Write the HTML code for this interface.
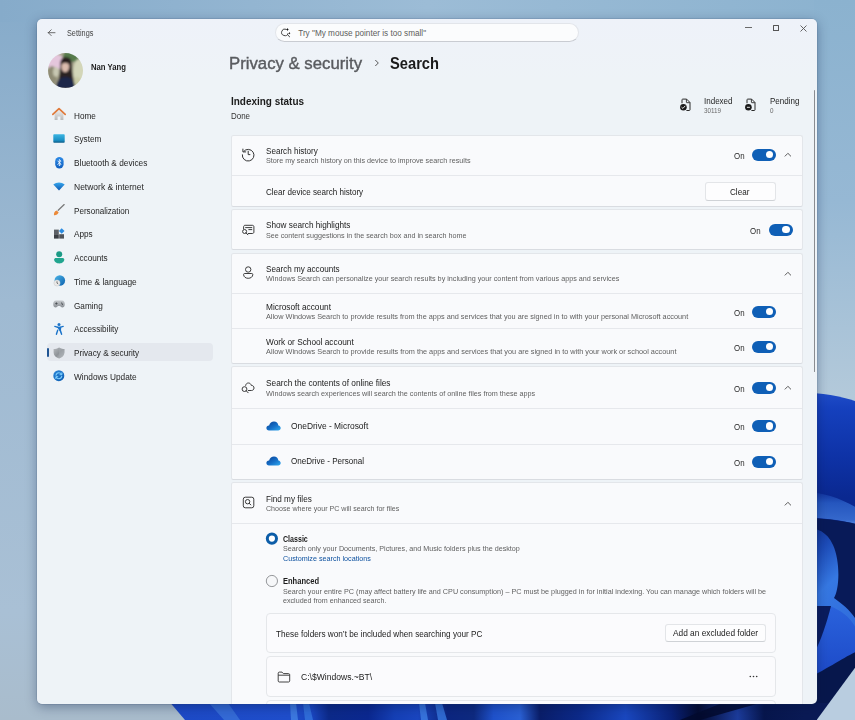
<!DOCTYPE html>
<html><head><meta charset="utf-8">
<style>
*{margin:0;padding:0;box-sizing:border-box}
html,body{width:855px;height:720px;overflow:hidden}
body{position:relative;font-family:"Liberation Sans",sans-serif;background:#8fb0cc}
#wp{position:absolute;left:0;top:0}
.win{position:absolute;left:37px;top:19px;width:780px;height:685px;border-radius:5px;overflow:hidden;background:linear-gradient(#eef2f9,#eef3f7 60px);box-shadow:0 3px 12px rgba(0,20,60,.35),0 0 0 0.5px rgba(60,80,110,.25)}
.pg{position:absolute;left:-37px;top:-19px;width:855px;height:720px}
.t{position:absolute;white-space:nowrap;line-height:1;color:#1b1b1b;transform-origin:0 0}
.s{color:#5f5f5f}
.card{position:absolute;left:231.3px;width:571.5px;background:#f9fafc;border:1px solid #e3e6ea;border-bottom-color:#d9dce1;border-radius:2.5px}
.sep{position:absolute;left:232px;width:570px;height:1px;background:#e6e8ec}
.tg{position:absolute;width:24px;height:12px;border-radius:6px;background:#0f5fb6}
.tg::after{content:"";position:absolute;left:13.6px;top:2.2px;width:7.6px;height:7.6px;border-radius:50%;background:#fff}
.pg svg{position:absolute;overflow:visible}
</style></head><body>
<svg id="wp" width="855" height="720" viewBox="0 0 855 720">
<defs>
<linearGradient id="sky" x1="0" y1="0" x2="0" y2="1"><stop offset="0" stop-color="#86abca"/><stop offset=".42" stop-color="#9fbad2"/><stop offset=".85" stop-color="#a9c0d5"/><stop offset="1" stop-color="#a9bccc"/></linearGradient>
<linearGradient id="skyt" x1="0" y1="0" x2="1" y2="0"><stop offset="0" stop-color="#86abca"/><stop offset=".5" stop-color="#9cbcd6"/><stop offset="1" stop-color="#8bb2cf"/></linearGradient>
<linearGradient id="skyr" x1="0" y1="0" x2="0" y2="1"><stop offset="0" stop-color="#8bb2cf"/><stop offset=".28" stop-color="#96b8d4"/><stop offset=".55" stop-color="#b3c9da"/><stop offset="1" stop-color="#b3c9da"/></linearGradient>
<linearGradient id="pa" x1="0" y1="0" x2="0" y2="1"><stop offset="0" stop-color="#1f4cc8"/><stop offset=".05" stop-color="#1540bd"/><stop offset=".2" stop-color="#0e32a6"/><stop offset=".32" stop-color="#0a2890"/><stop offset="1" stop-color="#0a2585"/></linearGradient>
<linearGradient id="pb" x1="0" y1="0" x2="0" y2="1"><stop offset="0" stop-color="#0e2f9a"/><stop offset=".35" stop-color="#2556be"/><stop offset=".85" stop-color="#3568cc"/><stop offset="1" stop-color="#5a90e6"/></linearGradient>
<linearGradient id="pd" x1="0" y1="0" x2="0.3" y2="1"><stop offset="0" stop-color="#0c2a84"/><stop offset=".2" stop-color="#1d4cb8"/><stop offset=".4" stop-color="#3678e2"/><stop offset="1" stop-color="#2a62d6"/></linearGradient>
<linearGradient id="pe" x1="0" y1="0" x2="0" y2="1"><stop offset="0" stop-color="#2a62dc"/><stop offset="1" stop-color="#1c48c6"/></linearGradient>
<linearGradient id="bs" x1="0" y1="0" x2="1" y2="0">
<stop offset="0" stop-color="#1d4ac6"/><stop offset=".18" stop-color="#1f4ecc"/><stop offset=".215" stop-color="#1a46c0"/><stop offset=".24" stop-color="#0c2a8a"/>
<stop offset=".3" stop-color="#0b2890"/><stop offset=".34" stop-color="#1540b6"/><stop offset=".375" stop-color="#1a46c0"/><stop offset=".42" stop-color="#0c2680"/><stop offset=".46" stop-color="#0e2a80"/>
<stop offset=".49" stop-color="#1f52cc"/><stop offset=".53" stop-color="#2a60d4"/><stop offset=".56" stop-color="#0a1e6a"/><stop offset=".62" stop-color="#0c2a8a"/>
<stop offset=".69" stop-color="#1a48c0"/><stop offset=".76" stop-color="#0a2278"/><stop offset=".8" stop-color="#040b30"/><stop offset=".86" stop-color="#1c3c9c"/><stop offset=".9" stop-color="#07164d"/><stop offset=".96" stop-color="#0a1a55"/><stop offset="1" stop-color="#0a1a55"/></linearGradient>
</defs>
<rect width="855" height="720" fill="url(#sky)"/>
<rect x="0" y="0" width="855" height="22" fill="url(#skyt)"/>
<rect x="814" y="0" width="41" height="720" fill="url(#skyr)"/>
<path d="M800 392.5C825 392.5 845 397 860 403V720H800Z" fill="url(#pa)"/>
<path d="M800 491C825 492 845 500 860 510V525C840 520 825 518 800 517Z" fill="url(#pb)"/>
<path d="M800 518C825 518 845 521 860 525V720H800Z" fill="#081a58"/>
<path d="M800 528C815 527 826 530 833 545C840 560 840 588 834 598C845 606 855 614 860 628V720H800Z" fill="url(#pd)"/>
<path d="M800 606H830C845 612 856 622 860 640V650C845 658 830 668 800 682Z" fill="url(#pe)"/>
<path d="M800 606H831C827 622 821 640 814 654H800Z" fill="#0a1c5e"/>
<path d="M800 682C830 668 845 656 860 650V720H800Z" fill="#07174c"/>
<path d="M170.5 703L185 720H818L830 703Z" fill="url(#bs)"/>
<path d="M209 703L224 720H240L228 703Z" fill="#3a72da" opacity=".8"/>
<path d="M290 703L291 720H298L296 703Z" fill="#3f7de2" opacity=".9"/>
<path d="M303 703L305 720H313L309 703Z" fill="#3270dc" opacity=".9"/>
<path d="M419 703L421 720H428L425 703Z" fill="#3a78e0" opacity=".9"/>
<path d="M435 703L438 720H447L442 703Z" fill="#3574dc" opacity=".85"/>
<path d="M680 720L722 703H760L700 720Z" fill="#040b2e" opacity=".85"/>
<path d="M857 665L817 719.5V720H860V665Z" fill="#b9cde0"/>
</svg>
<div class="win"><div class="pg">
<svg style="left:46px;top:28px" width="12" height="10" viewBox="0 0 12 10"><path d="M2.3 4.7H9M2.3 4.7L5.2 1.8M2.3 4.7L5.2 7.6" fill="none" stroke="#555" stroke-width="0.85" stroke-linecap="round"/></svg>
<div class="t " style="left:66.60px;top:29.00px;font-size:8.39px;transform:scaleX(0.870);color:#444;">Settings</div>
<div style="position:absolute;left:275px;top:23px;width:304px;height:18.5px;border-radius:9.5px;background:#fbfcfd;border:1px solid #e2e5ea;border-bottom-color:#c9ccd2"></div>
<svg style="left:280px;top:27px" width="12" height="12" viewBox="0 0 12 12"><path d="M6.2 2.3A3.3 3.3 0 1 0 8.1 6.2" fill="none" stroke="#3a3a3a" stroke-width="0.95"/><path d="M7.4 7.6L9.6 9.8" stroke="#3a3a3a" stroke-width="1" stroke-linecap="round"/><path d="M7.4 0.9Q7.7 2.2 8.9 2.5Q7.7 2.8 7.4 4.1Q7.1 2.8 5.9 2.5Q7.1 2.2 7.4 0.9Z" fill="#111"/><path d="M9.4 5.1Q9.6 6 10.4 6.3Q9.6 6.6 9.4 7.5Q9.2 6.6 8.4 6.3Q9.2 6 9.4 5.1Z" fill="#111"/></svg>
<div class="t " style="left:298.20px;top:30.00px;font-size:8.20px;color:#5c5c5c;">Try "My mouse pointer is too small"</div>
<div style="position:absolute;left:745.3px;top:27.4px;width:6.3px;height:0.9px;background:#6a6a6a"></div>
<div style="position:absolute;left:773px;top:25px;width:6px;height:6px;border:1px solid #555;border-radius:0.5px"></div>
<svg style="left:800px;top:25px" width="7" height="7" viewBox="0 0 7 7"><path d="M0.5 0.5L6.5 6.5M6.5 0.5L0.5 6.5" stroke="#555" stroke-width="0.9"/></svg>
<svg style="left:47.8px;top:53.2px" width="35" height="35" viewBox="0 0 35 35">
<defs><clipPath id="av"><circle cx="17.5" cy="17.6" r="17.5"/></clipPath>
<filter id="avb" x="-20%" y="-20%" width="140%" height="140%"><feGaussianBlur stdDeviation="0.9"/></filter></defs>
<g clip-path="url(#av)"><g filter="url(#avb)"><rect x="-3" y="-3" width="41" height="41" fill="#a7a48c"/>
<ellipse cx="7" cy="9" rx="9" ry="8" fill="#e4c6dc"/>
<ellipse cx="24" cy="3" rx="9" ry="6" fill="#557a4c"/>
<ellipse cx="31" cy="19" rx="6" ry="13" fill="#d3d6b8"/>
<ellipse cx="4" cy="23" rx="5" ry="10" fill="#8f8c74"/>
<ellipse cx="8" cy="19" rx="3" ry="5" fill="#c8c8b2"/>
<ellipse cx="29" cy="30" rx="5" ry="6" fill="#c9cba6"/>
<path d="M12 14C12 6.5 14 4 17.5 4C22 4 24 7 24 13C24 20 25.5 25 26 30H10C11 25 12 19 12 14Z" fill="#2a2020"/>
<path d="M8 36C8 28 11 24 17.5 24C24 24 27 28 27 36Z" fill="#1e2648"/>
<ellipse cx="17.2" cy="13.6" rx="3.9" ry="5.6" fill="#dcbcad"/>
<path d="M13 10C14 7 19 6.5 21.5 9L21.5 11C19 9.5 15 9.5 13 11.5Z" fill="#241c1c"/>
</g></g></svg>
<div class="t " style="left:90.90px;top:63.00px;font-size:8.97px;transform:scaleX(0.860);color:#1b1b1b;font-weight:700;">Nan Yang</div>
<div style="position:absolute;left:47px;top:343px;width:166px;height:18px;border-radius:4px;background:#e4e8ee"></div>
<div style="position:absolute;left:47px;top:348.2px;width:1.8px;height:8.6px;border-radius:1px;background:#1f5593"></div>
<div class="t " style="left:73.60px;top:112.00px;font-size:9.02px;transform:scaleX(0.909);color:#1f1f1f;">Home</div>
<div class="t " style="left:73.60px;top:135.00px;font-size:9.02px;transform:scaleX(0.909);color:#1f1f1f;">System</div>
<div class="t " style="left:73.60px;top:159.00px;font-size:9.13px;transform:scaleX(0.909);color:#1f1f1f;">Bluetooth &amp; devices</div>
<div class="t " style="left:73.60px;top:183.00px;font-size:9.35px;transform:scaleX(0.909);color:#1f1f1f;">Network &amp; internet</div>
<div class="t " style="left:73.60px;top:207.00px;font-size:8.91px;transform:scaleX(0.909);color:#1f1f1f;">Personalization</div>
<div class="t " style="left:73.60px;top:230.00px;font-size:9.02px;transform:scaleX(0.909);color:#1f1f1f;">Apps</div>
<div class="t " style="left:73.60px;top:254.00px;font-size:9.02px;transform:scaleX(0.909);color:#1f1f1f;">Accounts</div>
<div class="t " style="left:73.60px;top:278.00px;font-size:9.19px;transform:scaleX(0.909);color:#1f1f1f;">Time &amp; language</div>
<div class="t " style="left:73.60px;top:302.00px;font-size:9.02px;transform:scaleX(0.909);color:#1f1f1f;">Gaming</div>
<div class="t " style="left:73.60px;top:325.00px;font-size:8.97px;transform:scaleX(0.909);color:#1f1f1f;">Accessibility</div>
<div class="t " style="left:73.60px;top:349.00px;font-size:9.02px;transform:scaleX(0.909);color:#1f1f1f;">Privacy &amp; security</div>
<div class="t " style="left:73.60px;top:373.00px;font-size:9.13px;transform:scaleX(0.909);color:#1f1f1f;">Windows Update</div>
<svg style="left:52px;top:107px" width="14" height="14" viewBox="0 0 14 14">
<defs><linearGradient id="hb" x1="0" y1="0" x2="0" y2="1"><stop offset="0" stop-color="#f0f0f0"/><stop offset="1" stop-color="#b9b9b9"/></linearGradient></defs>
<path d="M2.6 6.5V13H5.6V9.6H8.4V13H11.4V6.5L7 2.6Z" fill="url(#hb)"/>
<path d="M0.8 7.3L7 1.6L13.2 7.3" fill="none" stroke="#e07a3b" stroke-width="1.7" stroke-linecap="round" stroke-linejoin="round"/>
</svg>
<svg style="left:53px;top:134px" width="12" height="9" viewBox="0 0 12 9"><defs><linearGradient id="sy" x1="0" y1="0" x2="0" y2="1"><stop offset="0" stop-color="#3cb6e3"/><stop offset=".7" stop-color="#1a8fc4"/><stop offset="1" stop-color="#0b5a86"/></linearGradient></defs><rect x="0.3" y="0.2" width="11.4" height="8.6" rx="0.8" fill="url(#sy)"/></svg>
<svg style="left:55px;top:156.5px" width="9" height="12" viewBox="0 0 9 12"><defs><linearGradient id="bt" x1="0" y1="0" x2="0" y2="1"><stop offset="0" stop-color="#2e8be6"/><stop offset="1" stop-color="#0f5fc0"/></linearGradient></defs><rect x="0.2" y="0" width="8.4" height="11.4" rx="4.2" fill="url(#bt)"/><path d="M2.5 3.7L6 7.2L4.3 8.9V2.5L6 4.2L2.5 7.7" fill="none" stroke="#fff" stroke-width="0.8" stroke-linejoin="round"/></svg>
<svg style="left:53px;top:182px" width="12" height="9" viewBox="0 0 12 9"><defs><linearGradient id="nw" x1="0" y1="0" x2="0" y2="1"><stop offset="0" stop-color="#38a8ee"/><stop offset="1" stop-color="#0a56b0"/></linearGradient></defs><path d="M0.3 2.6C3.5 -0.2 8.5 -0.2 11.7 2.6L6 8.6Z" fill="url(#nw)"/></svg>
<svg style="left:53px;top:204px" width="12" height="12" viewBox="0 0 12 12"><path d="M5.2 6.2L11.2 0.6" stroke="#7a7a7a" stroke-width="1.3" stroke-linecap="round"/><path d="M1 11.2C0.6 9.6 1.4 7.2 3.6 6.6L5.6 8.3C5 10.6 2.6 11.6 1 11.2Z" fill="#eb8a3a"/></svg>
<svg style="left:54px;top:228px" width="11" height="11" viewBox="0 0 11 11"><rect x="0" y="1.6" width="4.8" height="4.4" fill="#5d6168"/><rect x="0" y="6.2" width="4.8" height="4.4" fill="#3b3f45"/><rect x="5.2" y="6.2" width="4.8" height="4.4" fill="#50545a"/><path d="M7.7 0.2L10.5 3L7.7 5.8L4.9 3Z" fill="#2b8be0"/></svg>
<svg style="left:54px;top:250px" width="11" height="14" viewBox="0 0 11 14"><circle cx="5.2" cy="4.2" r="3" fill="#1b9a86"/><path d="M0.1 9.6C0.1 8.4 1 7.9 2 7.9H8.4C9.4 7.9 10.3 8.4 10.3 9.6C10.3 12 8 13.5 5.2 13.5C2.4 13.5 0.1 12 0.1 9.6Z" fill="#21a58f"/></svg>
<svg style="left:53px;top:275px" width="13" height="12" viewBox="0 0 13 12"><defs><linearGradient id="gl" x1="0" y1="0" x2="1" y2="1"><stop offset="0" stop-color="#4cb6e8"/><stop offset="1" stop-color="#0a5fae"/></linearGradient></defs><circle cx="6.8" cy="5.5" r="5.3" fill="url(#gl)"/><circle cx="4" cy="8" r="3.1" fill="#e9e9e9" stroke="#c9c9c9" stroke-width="0.5"/><path d="M4 6.3V8.1L5.2 8.9" fill="none" stroke="#444" stroke-width="0.7"/></svg>
<svg style="left:53px;top:300px" width="12" height="8" viewBox="0 0 12 8"><defs><linearGradient id="gm" x1="0" y1="0" x2="0" y2="1"><stop offset="0" stop-color="#c4c8cc"/><stop offset="1" stop-color="#8a8f95"/></linearGradient></defs><path d="M3 0.6H9C11 0.6 11.8 2.4 11.8 4.2C11.8 6.4 10.6 7.5 9.3 7.5C8.3 7.5 7.8 6.6 7 6.1H5C4.2 6.6 3.7 7.5 2.7 7.5C1.4 7.5 0.2 6.4 0.2 4.2C0.2 2.4 1 0.6 3 0.6Z" fill="url(#gm)"/><path d="M2.2 3.5H4.6M3.4 2.3V4.7" stroke="#3d4247" stroke-width="0.7"/><circle cx="8.6" cy="3" r="0.6" fill="#3d4247"/><circle cx="9.4" cy="4.2" r="0.6" fill="#3d4247"/></svg>
<svg style="left:54px;top:322.5px" width="10" height="12" viewBox="0 0 10 12"><circle cx="5" cy="1.6" r="1.5" fill="#1a73c9"/><path d="M0.8 3.4L5 4.6L9.2 3.4" fill="none" stroke="#1a73c9" stroke-width="1.3" stroke-linecap="round"/><path d="M3.4 4.4H6.6L6.3 7.2L7.6 11.2M3.7 7.2L2.4 11.2" fill="#1a73c9" stroke="#1a73c9" stroke-width="1.4" stroke-linecap="round" stroke-linejoin="round"/></svg>
<svg style="left:53px;top:346.5px" width="12" height="12" viewBox="0 0 12 12"><defs><linearGradient id="sh" x1="0" y1="0" x2="1" y2="1"><stop offset="0" stop-color="#b8bcc0"/><stop offset=".5" stop-color="#8e9398"/><stop offset="1" stop-color="#c9cdd1"/></linearGradient></defs><path d="M6 0.4C7.8 1.6 9.6 2 11.4 2V5.6C11.4 8.6 9.2 10.6 6 11.6C2.8 10.6 0.6 8.6 0.6 5.6V2C2.4 2 4.2 1.6 6 0.4Z" fill="url(#sh)"/><path d="M6 0.4C7.8 1.6 9.6 2 11.4 2V5.6C11.4 8.6 9.2 10.6 6 11.6Z" fill="#a3a8ad" opacity=".6"/></svg>
<svg style="left:53px;top:370px" width="12" height="12" viewBox="0 0 12 12"><defs><linearGradient id="wu" x1="0" y1="0" x2="1" y2="1"><stop offset="0" stop-color="#2a86d8"/><stop offset="1" stop-color="#0d5cb0"/></linearGradient></defs><circle cx="5.8" cy="5.7" r="5.5" fill="url(#wu)"/><path d="M3 5.2C3.3 3.6 4.5 2.7 5.9 2.7C7 2.7 8 3.3 8.5 4.2M8.8 6.2C8.5 7.8 7.3 8.7 5.9 8.7C4.8 8.7 3.8 8.1 3.3 7.2" fill="none" stroke="#7fd0ff" stroke-width="1.1" stroke-linecap="round"/><path d="M8.9 2.8V4.7H7" fill="none" stroke="#7fd0ff" stroke-width="1" stroke-linecap="round" stroke-linejoin="round"/><path d="M2.9 8.6V6.7H4.8" fill="none" stroke="#7fd0ff" stroke-width="1" stroke-linecap="round" stroke-linejoin="round"/></svg>
<div class="t " style="left:229.30px;top:55.00px;font-size:17.00px;transform:scaleX(0.985);color:#595b5f;-webkit-text-stroke:0.4px #595b5f;">Privacy &amp; security</div>
<svg style="left:374px;top:59px" width="6" height="8" viewBox="0 0 6 8"><path d="M1.3 1L4.3 4L1.3 7" fill="none" stroke="#555" stroke-width="1"/></svg>
<div class="t " style="left:389.70px;top:55.00px;font-size:17.01px;transform:scaleX(0.864);color:#1a1a1a;font-weight:700;">Search</div>
<div class="t " style="left:231.40px;top:96.00px;font-size:10.50px;transform:scaleX(0.948);color:#1b1b1b;font-weight:700;">Indexing status</div>
<div class="t " style="left:231.20px;top:112.00px;font-size:8.75px;transform:scaleX(0.909);color:#333;">Done</div>
<svg style="left:679px;top:98px" width="12" height="14" viewBox="0 0 12 14"><path d="M3 5.2V1.8C3 1.4 3.3 1.1 3.7 1.1H7.6L11 4.5V11.8C11 12.2 10.7 12.5 10.3 12.5H7.4" fill="none" stroke="#2a2a2a" stroke-width="1"/><path d="M7.4 1.2V4.2C7.4 4.5 7.6 4.7 7.9 4.7H10.9" fill="none" stroke="#2a2a2a" stroke-width="0.9"/><g transform="translate(4.4 9.3)"><circle r="3.3" fill="#1a1a1a"/><path d="M-1.6 0.1L-0.5 1.1L1.6 -1.2" fill="none" stroke="#fff" stroke-width="0.9" stroke-linecap="round" stroke-linejoin="round"/></g></svg>
<div class="t " style="left:704.20px;top:97.00px;font-size:8.44px;transform:scaleX(0.952);color:#1f1f1f;">Indexed</div>
<div class="t " style="left:704.20px;top:108.00px;font-size:6.93px;transform:scaleX(0.909);color:#6a6a6a;">30119</div>
<svg style="left:744px;top:98px" width="12" height="14" viewBox="0 0 12 14"><path d="M3 5.2V1.8C3 1.4 3.3 1.1 3.7 1.1H7.6L11 4.5V11.8C11 12.2 10.7 12.5 10.3 12.5H7.4" fill="none" stroke="#2a2a2a" stroke-width="1"/><path d="M7.4 1.2V4.2C7.4 4.5 7.6 4.7 7.9 4.7H10.9" fill="none" stroke="#2a2a2a" stroke-width="0.9"/><g transform="translate(4.4 9.3)"><circle r="3.3" fill="#1a1a1a"/><path d="M-1.5 0H1.5" stroke="#fff" stroke-width="0.9"/></g></svg>
<div class="t " style="left:770.00px;top:97.00px;font-size:8.44px;transform:scaleX(0.952);color:#1f1f1f;">Pending</div>
<div class="t " style="left:770.20px;top:108.00px;font-size:6.93px;transform:scaleX(0.909);color:#6a6a6a;">0</div>
<div class="card" style="top:134.5px;height:72.30000000000001px;"></div>
<div class="sep" style="top:175px"></div>
<div class="card" style="top:208.5px;height:41.5px;"></div>
<div class="card" style="top:252.5px;height:111.5px;"></div>
<div class="sep" style="top:292.8px"></div>
<div class="sep" style="top:328px"></div>
<div class="card" style="top:366.2px;height:113.40000000000003px;"></div>
<div class="sep" style="top:407.5px"></div>
<div class="sep" style="top:443.5px"></div>
<div class="card" style="top:482.4px;height:237.60000000000002px;"></div>
<div class="sep" style="top:523px"></div>
<div class="t " style="left:266.00px;top:147.00px;font-size:8.91px;transform:scaleX(0.909);">Search history</div>
<div class="t s" style="left:266.00px;top:157.00px;font-size:7.58px;transform:scaleX(0.952);">Store my search history on this device to improve search results</div>
<div class="t " style="left:733.80px;top:152.00px;font-size:8.69px;transform:scaleX(0.909);color:#2a2a2a;">On</div>
<div class="tg" style="left:752px;top:148.70px"></div>
<svg style="left:784px;top:151.90px" width="8" height="6" viewBox="0 0 8 6"><path d="M0.8 4.4L3.9 1.3L7 4.4" fill="none" stroke="#4a4a4a" stroke-width="0.9"/></svg>
<div class="t " style="left:266.00px;top:188.00px;font-size:8.87px;transform:scaleX(0.909);">Clear device search history</div>
<div style="position:absolute;left:705px;top:182px;width:70.5px;height:18.5px;border-radius:3px;background:#fdfdfe;border:1px solid #e3e5e8;border-bottom-color:#cfd2d6"></div>
<div class="t " style="left:729.80px;top:188.00px;font-size:8.91px;transform:scaleX(0.909);">Clear</div>
<div class="t " style="left:266.00px;top:221.00px;font-size:9.04px;transform:scaleX(0.909);">Show search highlights</div>
<div class="t s" style="left:266.00px;top:232.00px;font-size:7.55px;transform:scaleX(0.952);">See content suggestions in the search box and in search home</div>
<div class="t " style="left:750.00px;top:227.00px;font-size:8.69px;transform:scaleX(0.909);color:#2a2a2a;">On</div>
<div class="tg" style="left:768.5px;top:223.70px"></div>
<div class="t " style="left:265.60px;top:265.00px;font-size:8.94px;transform:scaleX(0.909);">Search my accounts</div>
<div class="t s" style="left:265.60px;top:275.00px;font-size:7.58px;transform:scaleX(0.952);">Windows Search can personalize your search results by including your content from various apps and services</div>
<svg style="left:784px;top:270.50px" width="8" height="6" viewBox="0 0 8 6"><path d="M0.8 4.4L3.9 1.3L7 4.4" fill="none" stroke="#4a4a4a" stroke-width="0.9"/></svg>
<div class="t " style="left:266.00px;top:303.00px;font-size:9.13px;transform:scaleX(0.909);">Microsoft account</div>
<div class="t s" style="left:266.00px;top:313.00px;font-size:7.68px;transform:scaleX(0.952);">Allow Windows Search to provide results from the apps and services that you are signed in to with your personal Microsoft account</div>
<div class="t " style="left:733.80px;top:309.00px;font-size:8.69px;transform:scaleX(0.909);color:#2a2a2a;">On</div>
<div class="tg" style="left:752px;top:305.50px"></div>
<div class="t " style="left:266.00px;top:338.00px;font-size:9.12px;transform:scaleX(0.909);">Work or School account</div>
<div class="t s" style="left:266.00px;top:348.00px;font-size:7.69px;transform:scaleX(0.952);">Allow Windows Search to provide results from the apps and services that you are signed in to with your work or school account</div>
<div class="t " style="left:733.80px;top:344.00px;font-size:8.69px;transform:scaleX(0.909);color:#2a2a2a;">On</div>
<div class="tg" style="left:752px;top:340.50px"></div>
<div class="t " style="left:265.60px;top:379.00px;font-size:9.14px;transform:scaleX(0.909);">Search the contents of online files</div>
<div class="t s" style="left:265.60px;top:390.00px;font-size:7.60px;transform:scaleX(0.952);">Windows search experiences will search the contents of online files from these apps</div>
<div class="t " style="left:733.80px;top:385.00px;font-size:8.69px;transform:scaleX(0.909);color:#2a2a2a;">On</div>
<div class="tg" style="left:752px;top:381.50px"></div>
<svg style="left:784px;top:384.50px" width="8" height="6" viewBox="0 0 8 6"><path d="M0.8 4.4L3.9 1.3L7 4.4" fill="none" stroke="#4a4a4a" stroke-width="0.9"/></svg>
<svg style="left:265.5px;top:420.5px" width="15" height="10" viewBox="0 0 15 10"><defs><linearGradient id="od420" x1="0" y1="0" x2="1" y2="1"><stop offset="0" stop-color="#073f94"/><stop offset=".55" stop-color="#1670c8"/><stop offset="1" stop-color="#30aaf0"/></linearGradient></defs><path d="M3 9.4C1.4 9.4 0.4 8.3 0.4 6.9C0.4 5.4 1.6 4.3 3.1 4.4C3.8 2 5.8 0.6 8 0.6C10.4 0.6 12 2.2 12.4 4.4C13.8 4.6 14.7 5.7 14.7 7C14.7 8.4 13.6 9.4 12.2 9.4Z" fill="url(#od420)"/></svg>
<div class="t " style="left:290.80px;top:422.00px;font-size:9.28px;transform:scaleX(0.909);">OneDrive - Microsoft</div>
<div class="t " style="left:733.80px;top:423.00px;font-size:8.69px;transform:scaleX(0.909);color:#2a2a2a;">On</div>
<div class="tg" style="left:752px;top:420.00px"></div>
<svg style="left:265.5px;top:456px" width="15" height="10" viewBox="0 0 15 10"><defs><linearGradient id="od456" x1="0" y1="0" x2="1" y2="1"><stop offset="0" stop-color="#073f94"/><stop offset=".55" stop-color="#1670c8"/><stop offset="1" stop-color="#30aaf0"/></linearGradient></defs><path d="M3 9.4C1.4 9.4 0.4 8.3 0.4 6.9C0.4 5.4 1.6 4.3 3.1 4.4C3.8 2 5.8 0.6 8 0.6C10.4 0.6 12 2.2 12.4 4.4C13.8 4.6 14.7 5.7 14.7 7C14.7 8.4 13.6 9.4 12.2 9.4Z" fill="url(#od456)"/></svg>
<div class="t " style="left:290.80px;top:457.00px;font-size:8.89px;transform:scaleX(0.909);">OneDrive - Personal</div>
<div class="t " style="left:733.80px;top:459.00px;font-size:8.69px;transform:scaleX(0.909);color:#2a2a2a;">On</div>
<div class="tg" style="left:752px;top:455.50px"></div>
<div class="t " style="left:266.00px;top:495.00px;font-size:8.97px;transform:scaleX(0.909);">Find my files</div>
<div class="t s" style="left:266.00px;top:505.00px;font-size:7.46px;transform:scaleX(0.952);">Choose where your PC will search for files</div>
<svg style="left:784px;top:500.50px" width="8" height="6" viewBox="0 0 8 6"><path d="M0.8 4.4L3.9 1.3L7 4.4" fill="none" stroke="#4a4a4a" stroke-width="0.9"/></svg>
<svg style="left:265px;top:532px" width="14" height="14" viewBox="0 0 14 14"><circle cx="6.9" cy="6.6" r="4.6" fill="#fff" stroke="#0c5da8" stroke-width="3"/></svg>
<div class="t " style="left:282.90px;top:535.00px;font-size:8.50px;transform:scaleX(0.833);font-weight:700;">Classic</div>
<div class="t s" style="left:282.90px;top:545.00px;font-size:7.56px;transform:scaleX(0.952);">Search only your Documents, Pictures, and Music folders plus the desktop</div>
<div class="t " style="left:283.00px;top:555.00px;font-size:7.56px;transform:scaleX(0.952);color:#0a4f9e;">Customize search locations</div>
<svg style="left:265px;top:574px" width="14" height="14" viewBox="0 0 14 14"><circle cx="6.9" cy="7" r="5.6" fill="#f6f7f9" stroke="#8a8c90" stroke-width="0.9"/></svg>
<div class="t " style="left:282.90px;top:577.00px;font-size:8.66px;transform:scaleX(0.870);font-weight:700;">Enhanced</div>
<div class="t s" style="left:282.90px;top:588.00px;font-size:7.59px;transform:scaleX(0.952);">Search your entire PC (may affect battery life and CPU consumption) – PC must be plugged in for initial indexing. You can manage which folders will be</div>
<div class="t s" style="left:282.90px;top:597.00px;font-size:7.49px;transform:scaleX(0.952);">excluded from enhanced search.</div>
<div style="position:absolute;left:266px;top:612.5px;width:510px;height:40.5px;border-radius:4px;background:#fbfbfd;border:1px solid #e5e7ea"></div>
<div class="t " style="left:276.40px;top:630.00px;font-size:9.01px;transform:scaleX(0.909);">These folders won’t be included when searching your PC</div>
<div style="position:absolute;left:665px;top:624px;width:100.5px;height:18px;border-radius:3px;background:#fdfdfe;border:1px solid #e3e5e8;border-bottom-color:#cfd2d6"></div>
<div class="t " style="left:672.50px;top:629.00px;font-size:9.16px;transform:scaleX(0.909);">Add an excluded folder</div>
<div style="position:absolute;left:266px;top:655.5px;width:510px;height:41px;border-radius:4px;background:#fbfbfd;border:1px solid #e5e7ea"></div>
<svg style="left:276.5px;top:670.5px" width="14" height="12" viewBox="0 0 14 12"><path d="M1.2 2.2C1.2 1.6 1.6 1.1 2.2 1.1H5L6.4 2.6H11.6C12.2 2.6 12.7 3.1 12.7 3.7V9.9C12.7 10.5 12.2 11 11.6 11H2.2C1.6 11 1.2 10.5 1.2 9.9Z M1.2 4.2H12.7" fill="none" stroke="#3a3a3a" stroke-width="0.95"/></svg>
<div class="t " style="left:300.60px;top:672.00px;font-size:9.43px;transform:scaleX(0.909);">C:\$Windows.~BT\</div>
<svg style="left:749px;top:674.5px" width="10" height="3" viewBox="0 0 10 3"><circle cx="1.3" cy="1.5" r="0.8" fill="#333"/><circle cx="4.5" cy="1.5" r="0.8" fill="#333"/><circle cx="7.7" cy="1.5" r="0.8" fill="#333"/></svg>
<div style="position:absolute;left:266px;top:699.5px;width:510px;height:30px;border-radius:4px;background:#fbfbfd;border:1px solid #e5e7ea"></div>
<div style="position:absolute;left:813.7px;top:89.5px;width:1.5px;height:282.5px;border-radius:1px;background:#8a8c90"></div>
<svg style="left:241px;top:147.2px" width="14" height="14" viewBox="0 0 14 14"><path d="M2.6 4.6A5.8 5.8 0 1 1 1.4 7.4" fill="none" stroke="#333" stroke-width="1"/><path d="M1.9 1.7V4.9H5.1" fill="none" stroke="#333" stroke-width="1" stroke-linejoin="round"/><path d="M7.2 3.8V7.6H9.3" fill="none" stroke="#333" stroke-width="1"/></svg>
<svg style="left:241px;top:224px" width="14" height="12" viewBox="0 0 14 12"><path d="M2.6 5.4V2.8C2.6 1.9 3.2 1.3 4.1 1.3H11.4C12.3 1.3 12.9 1.9 12.9 2.8V8C12.9 8.9 12.3 9.5 11.4 9.5H6.9" fill="none" stroke="#333" stroke-width="0.95"/><path d="M4.2 3.6H11.2M7.4 5.6H11.2" stroke="#333" stroke-width="0.95"/><circle cx="3.6" cy="7.5" r="2" fill="none" stroke="#333" stroke-width="0.95"/><path d="M5 8.9L6.9 10.8" stroke="#333" stroke-width="1" stroke-linecap="round"/></svg>
<svg style="left:242px;top:265px" width="13" height="15" viewBox="0 0 13 15"><circle cx="6.2" cy="4.5" r="2.7" fill="none" stroke="#333" stroke-width="0.95"/><path d="M1.6 9.5C1.6 8.9 2 8.5 2.6 8.5H9.8C10.4 8.5 10.8 8.9 10.8 9.5C10.8 12 8.6 13.3 6.2 13.3C3.8 13.3 1.6 12 1.6 9.5Z" fill="none" stroke="#333" stroke-width="0.95"/></svg>
<svg style="left:240px;top:381px" width="16" height="14" viewBox="0 0 16 14"><path d="M5.6 4.8C5.8 2.9 7 2 8.4 2C9.8 2 10.9 2.9 11.2 4.3C12.9 4.4 14 5.4 14 7C14 8.5 12.9 9.5 11.4 9.5H7.9" fill="none" stroke="#333" stroke-width="0.95"/><circle cx="4.5" cy="8.1" r="2.4" fill="none" stroke="#333" stroke-width="0.95"/><path d="M6.2 9.8L8.2 11.8" stroke="#333" stroke-width="1" stroke-linecap="round"/></svg>
<svg style="left:242px;top:496px" width="13" height="13" viewBox="0 0 13 13"><rect x="1.3" y="1.2" width="10.5" height="10.6" rx="2" fill="none" stroke="#333" stroke-width="0.95"/><circle cx="5.6" cy="5.7" r="2.2" fill="none" stroke="#333" stroke-width="0.95"/><path d="M7.2 7.3L8.8 8.9" stroke="#333" stroke-width="1" stroke-linecap="round"/></svg>
</div></div>
</body></html>
